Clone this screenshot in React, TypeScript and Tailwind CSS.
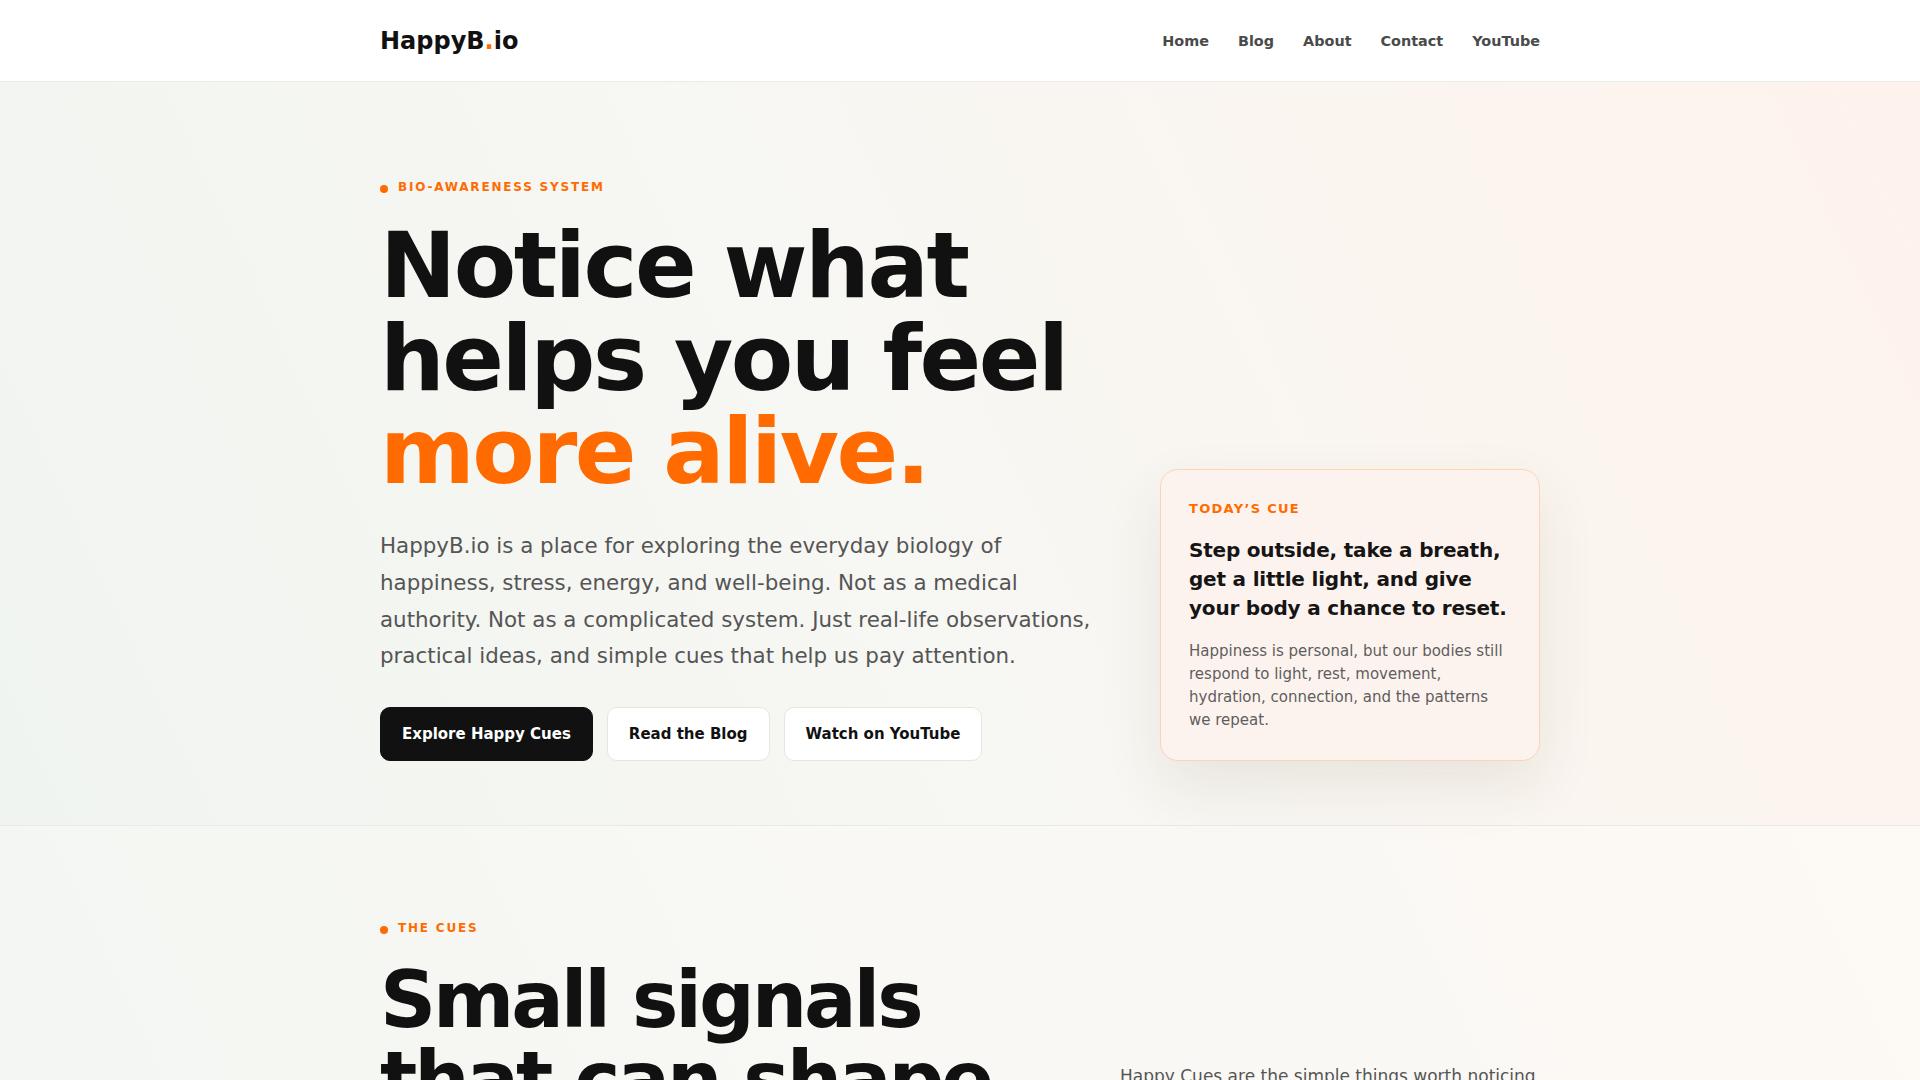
import React from 'react'

const navLinks = ['Home', 'Blog', 'About', 'Contact', 'YouTube']

function Eyebrow({ children }: { children: React.ReactNode }) {
    return (
        <div className="flex h-4 items-center gap-2.5 text-xs leading-4 font-bold tracking-[0.15em] text-[#ff6b00] uppercase">
            <span className="mt-[3px] h-2 w-2 rounded-full bg-[#ff6b00]" />
            {children}
        </div>
    )
}

export default function App() {
    return (
        <div className="min-h-screen bg-white font-['DejaVu_Sans',sans-serif] text-[#111]">
            <header className="h-[82px] border-b border-[#ebebe8] bg-white">
                <div className="mx-auto flex h-full max-w-[1160px] items-center justify-between">
                    <a href="#" className="text-2xl font-bold text-[#111]">
                        HappyB<span className="text-[#ff6b00]">.</span>io
                    </a>
                    <nav className="flex items-center gap-[29px] pt-[2px] text-[14.4px] font-bold text-[#4a4a4a]">
                        {navLinks.map((link) => (
                            <a key={link} href="#" className="hover:text-[#111]">
                                {link}
                            </a>
                        ))}
                    </nav>
                </div>
            </header>

            <section className="border-b border-[#e9e9e5] bg-[linear-gradient(65deg,#f0f4f0_0%,#f7f7f3_45%,#fef3ec_100%)] pt-[97px] pb-16">
                <div className="mx-auto grid max-w-[1160px] grid-cols-[1fr_380px] items-end gap-[60px]">
                    <div>
                        <Eyebrow>Bio-Awareness System</Eyebrow>
                        <h1 className="mt-6 text-[91px] leading-[93px] font-bold tracking-[-0.027em] text-[#111]">
                            Notice what
                            <br />
                            helps you feel
                            <br />
                            <span className="text-[#ff6b00]">more alive.</span>
                        </h1>
                        <p className="mt-[30px] max-w-[720px] text-[21.4px] leading-[36.8px] text-[#555]">
                            HappyB.io is a place for exploring the everyday biology of happiness, stress, energy, and
                            well-being. Not as a medical authority. Not as a complicated system. Just real-life
                            observations, practical ideas, and simple cues that help us pay attention.
                        </p>
                        <div className="mt-8 flex gap-[14px]">
                            <a href="#" className="rounded-[10px] border border-[#111] bg-[#111] px-[21px] py-4 text-[15px] leading-5 font-bold text-white">
                                Explore Happy Cues
                            </a>
                            <a href="#" className="rounded-[10px] border border-[#e6e6e1] bg-white px-[21px] py-4 text-[15px] leading-5 font-bold text-[#111]">
                                Read the Blog
                            </a>
                            <a href="#" className="rounded-[10px] border border-[#e6e6e1] bg-white px-[21px] py-4 text-[15px] leading-5 font-bold text-[#111]">
                                Watch on YouTube
                            </a>
                        </div>
                    </div>

                    <aside className="rounded-[18px] border border-[#fcd5b5] bg-[#fdf3ee] px-7 pt-[29px] pb-7 shadow-[0_24px_60px_rgba(70,50,30,0.09)]">
                        <div className="text-[13px] leading-[1.5] font-bold tracking-[0.1em] text-[#ff6b00]">
                            TODAY’S CUE
                        </div>
                        <h3 className="mt-[18px] text-xl leading-[29px] font-bold tracking-[-0.01em] text-[#151515]">
                            Step outside, take a breath, get a little light, and give your body a chance to reset.
                        </h3>
                        <p className="mt-[17px] text-[15px] leading-[23px] text-[#5e5e5e]">
                            Happiness is personal, but our bodies still respond to light, rest, movement, hydration,
                            connection, and the patterns we repeat.
                        </p>
                    </aside>
                </div>
            </section>

            <section className="bg-[linear-gradient(65deg,#f2f6f2_0%,#f9f8f4_50%,#fdf9f5_100%)] pt-[94px] pb-24">
                <div className="mx-auto max-w-[1160px]">
                    <Eyebrow>The Cues</Eyebrow>
                    <div className="mt-6 grid grid-cols-[1fr_420px] items-start gap-[80px]">
                        <h2 className="text-[78px] leading-[80px] font-bold tracking-[-0.04em] text-[#111]">
                            Small signals
                            <br />
                            that can shape
                            <br />
                            your day.
                        </h2>
                        <p className="mt-[102px] text-[17px] leading-[1.7] text-[#555]">
                            Happy Cues are the simple things worth noticing in an ordinary day: the light you get, the
                            way you move, what you drink, how you rest, and who you spend time with.
                        </p>
                    </div>
                </div>
            </section>
        </div>
    )
}
